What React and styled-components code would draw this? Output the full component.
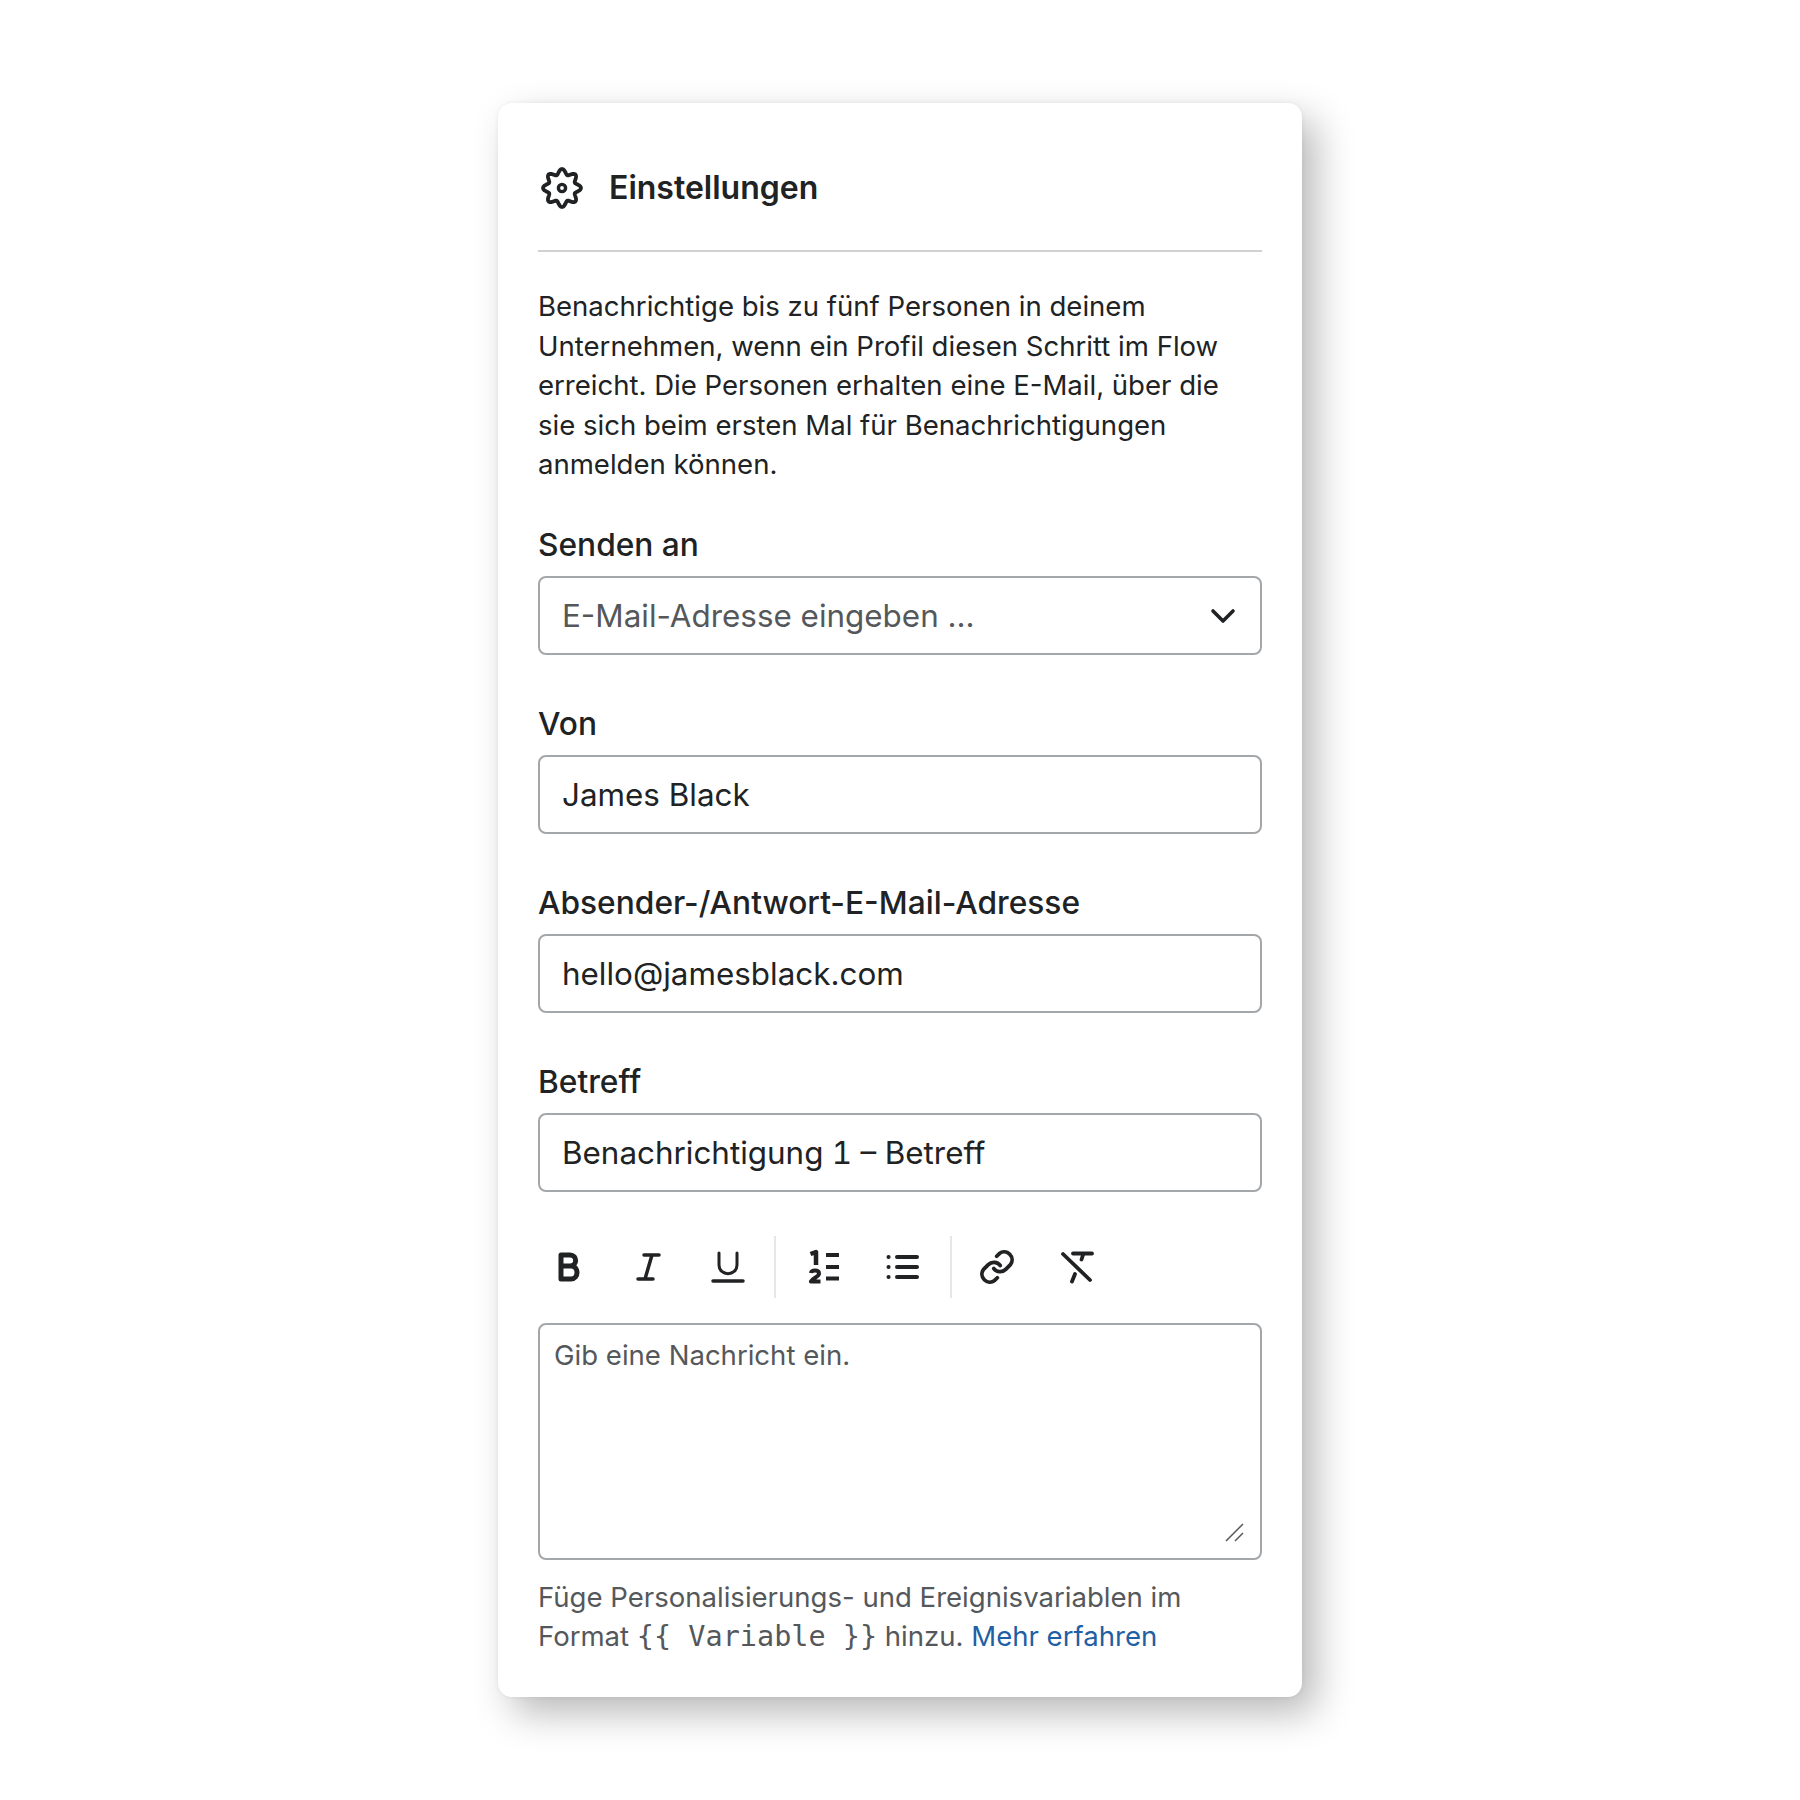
import React from "react";
import styled, { createGlobalStyle } from "styled-components";

const Global = createGlobalStyle`
  html, body {
    margin: 0;
    background: #fff;
  }
  body {
    font-family: Inter, "Liberation Sans", sans-serif;
    color: #202223;
  }
`;
const Page = styled.div`
  height: 1800px;
  padding-top: 103px;
  box-sizing: border-box;
`;
const Card = styled.div`
  box-sizing: border-box;
  width: 804px;
  height: 1594px;
  margin: 0 auto;
  padding: 0 40px;
  background: #fff;
  border-radius: 14px;
  box-shadow: 0 0 5px rgba(0, 0, 0, 0.06), 14px 16px 38px rgba(0, 0, 0, 0.28);
`;
const Header = styled.div`
  display: flex;
  align-items: center;
  gap: 24px;
  height: 149px;
  padding: 22px 0 0 1px;
  box-sizing: border-box;
  border-bottom: 2px solid #cfd1d3;
`;
const Title = styled.h2`
  margin: 0;
  font-size: 32px;
  font-weight: 600;
  line-height: 40px;
  color: #202223;
`;
const Intro = styled.p`
  margin: 35px 0 0;
  font-size: 27.55px;
  line-height: 39.6px;
  color: #202223;
`;
const Field = styled.div`
  margin-top: ${(p) => p.$top || 49}px;
`;
const Label = styled.div`
  font-size: 31.7px;
  font-weight: 500;
  line-height: 40px;
  margin-bottom: 11px;
  color: #202223;
`;
const InputBox = styled.div`
  box-sizing: border-box;
  display: flex;
  align-items: center;
  justify-content: space-between;
  height: 79px;
  padding: 2px 22px 0;
  border: 2px solid #a4a7aa;
  border-radius: 8px;
  font-size: 31.4px;
  font-feature-settings: ${(p) => (p.$tabular ? '"tnum"' : "normal")};
  color: ${(p) => (p.$placeholder ? "#55585b" : "#202223")};
`;
const Toolbar = styled.div`
  display: flex;
  align-items: center;
  height: 62px;
  margin-top: 44px;
`;
const ToolGroup = styled.div`
  display: flex;
  align-items: center;
  gap: 43px;
  padding: 0 ${(p) => p.$right || 29}px 0 ${(p) => p.$left}px;
  height: 62px;
  border-right: ${(p) => (p.$divider ? "2px solid #e6e7e8" : "none")};
`;
const MessageBox = styled.div`
  position: relative;
  box-sizing: border-box;
  height: 237px;
  margin-top: 25px;
  padding: 12px 14px;
  border: 2px solid #a4a7aa;
  border-radius: 8px;
  font-size: 27.55px;
  line-height: 36px;
  color: #55585b;
`;
const Grip = styled.svg`
  position: absolute;
  right: 15px;
  bottom: 15px;
`;
const Help = styled.div`
  margin-top: 18px;
  font-size: 27.55px;
  line-height: 39px;
  color: #55585b;
`;
const HelpLine = styled.div`
  white-space: pre;
`;
const Code = styled.code`
  display: inline-block;
  font-family: "DejaVu Sans Mono", "Liberation Mono", monospace;
  font-size: 28.5px;
  line-height: 39px;
`;
const MoreLink = styled.a`
  color: #1f5fa3;
  text-decoration: none;
`;
const Icon = styled.svg`
  display: block;
  flex: none;
`;
const ChevronIcon = styled(Icon)`
  margin-right: 2px;
`;

// scalloped outline with 8 lobes
const gearPath = () => {
  const pts = [];
  for (let i = 0; i < 96; i++) {
    const a = (i / 96) * Math.PI * 2;
    const r = 16.4 + 2.6 * Math.cos(8 * a);
    pts.push(`${(23 + r * Math.sin(a)).toFixed(2)} ${(23 - r * Math.cos(a)).toFixed(2)}`);
  }
  return `M${pts.join("L")}Z`;
};

const Gear = () => (
  <Icon width="46" height="46" viewBox="0 0 46 46" fill="none" stroke="#202223" strokeWidth="3.800" strokeLinejoin="round">
    <path d={gearPath()} />
    <circle cx="23" cy="23" r="3.600" strokeWidth="3.400" />
  </Icon>
);
const Chevron = () => (
  <ChevronIcon width="26" height="26" viewBox="0 0 26 26" fill="none" stroke="#202223" strokeWidth="3.600" strokeLinecap="round" strokeLinejoin="round">
    <path d="M3 8l10 10L23 8" />
  </ChevronIcon>
);
const Bold = () => (
  <Icon width="36" height="36" viewBox="0 0 36 36" fill="none" stroke="#202223" strokeWidth="5" strokeLinejoin="round">
    <path d="M10 6h9c7.500 0 7.500 11 0 11h-9zM10 17h10c8 0 8 13 0 13H10z" />
  </Icon>
);
const Italic = () => (
  <Icon width="36" height="36" viewBox="0 0 36 36" fill="none" stroke="#202223" strokeWidth="3.500" strokeLinecap="round">
    <path d="M14 6h15M8 30h15M22 6l-7 24" />
  </Icon>
);
const Underline = () => (
  <Icon width="36" height="36" viewBox="0 0 36 36" fill="none" stroke="#202223" strokeLinecap="round">
    <path d="M10 4v12c0 11.500 18 11.500 18 0V4" strokeWidth="3" />
    <path d="M4 32h30" strokeWidth="3.500" />
  </Icon>
);
const Ordered = () => (
  <Icon width="36" height="36" viewBox="0 0 36 36" fill="none" stroke="#202223">
    <path d="M3.500 5L9 3v13" strokeWidth="4.500" strokeLinejoin="round" />
    <path d="M4 24c.5-3.500 8-3.500 8 .5 0 3.500-6 4-8 8h9.500" strokeWidth="4" strokeLinejoin="round" />
    <path d="M19 6h13M19 18h13M19 29.500h13" strokeWidth="4" />
  </Icon>
);
const Bullets = () => (
  <Icon width="36" height="36" viewBox="0 0 36 36" fill="none" stroke="#202223" strokeLinecap="round">
    <path d="M11 8h20M11 18h20M11 28h20" strokeWidth="4" />
    <path d="M2.500 8h.1M2.500 18h.1M2.500 28h.1" strokeWidth="4" />
  </Icon>
);
const LinkIcon = () => (
  <Icon width="38" height="38" viewBox="0 0 24 24" fill="none" stroke="#202223" strokeWidth="2.400" strokeLinecap="round" strokeLinejoin="round">
    <path d="M10 13a5 5 0 0 0 7.500.5l3-3a5 5 0 0 0-7-7l-1.700 1.700" />
    <path d="M14 11a5 5 0 0 0-7.500-.5l-3 3a5 5 0 0 0 7 7l1.700-1.700" />
  </Icon>
);
const ClearFormat = () => (
  <Icon width="36" height="36" viewBox="0 0 36 36" fill="none" stroke="#202223" strokeLinecap="round">
    <path d="M14 4.500h19" strokeWidth="3.800" />
    <path d="M4 5l27 26" strokeWidth="3.800" />
    <path d="M24 6l-1.500 4.500M16 25l-3 7.500" strokeWidth="3.800" />
  </Icon>
);

export default function App() {
  return (
    <Page>
      <Global />
      <Card>
        <Header>
          <Gear />
          <Title>Einstellungen</Title>
        </Header>
        <Intro>
          Benachrichtige bis zu fünf Personen in deinem Unternehmen, wenn ein Profil diesen Schritt im Flow erreicht.
          Die Personen erhalten eine E-Mail, über die sie sich beim ersten Mal für Benachrichtigungen anmelden können.
        </Intro>
        <Field $top={40}>
          <Label>Senden an</Label>
          <InputBox $placeholder>
            E-Mail-Adresse eingeben ...
            <Chevron />
          </InputBox>
        </Field>
        <Field>
          <Label>Von</Label>
          <InputBox>James Black</InputBox>
        </Field>
        <Field>
          <Label>Absender-/Antwort-E-Mail-Adresse</Label>
          <InputBox>hello@jamesblack.com</InputBox>
        </Field>
        <Field>
          <Label>Betreff</Label>
          <InputBox $tabular>Benachrichtigung 1 – Betreff</InputBox>
        </Field>
        <Toolbar>
          <ToolGroup $left={13} $divider>
            <Bold />
            <Italic />
            <Underline />
          </ToolGroup>
          <ToolGroup $left={31} $right={28} $divider>
            <Ordered />
            <Bullets />
          </ToolGroup>
          <ToolGroup $left={26}>
            <LinkIcon />
            <ClearFormat />
          </ToolGroup>
        </Toolbar>
        <MessageBox>
          Gib eine Nachricht ein.
          <Grip width="20" height="20" viewBox="0 0 20 20" fill="none" stroke="#55585b" strokeWidth="1.500">
            <path d="M1 18L18 1M10 18l8-8" />
          </Grip>
        </MessageBox>
        <Help>
          <HelpLine>Füge Personalisierungs- und Ereignisvariablen im</HelpLine>
          <HelpLine>
            {"Format "}
            <Code>{"{{ Variable }}"}</Code>
            {" hinzu. "}
            <MoreLink href="#">Mehr erfahren</MoreLink>
          </HelpLine>
        </Help>
      </Card>
    </Page>
  );
}
